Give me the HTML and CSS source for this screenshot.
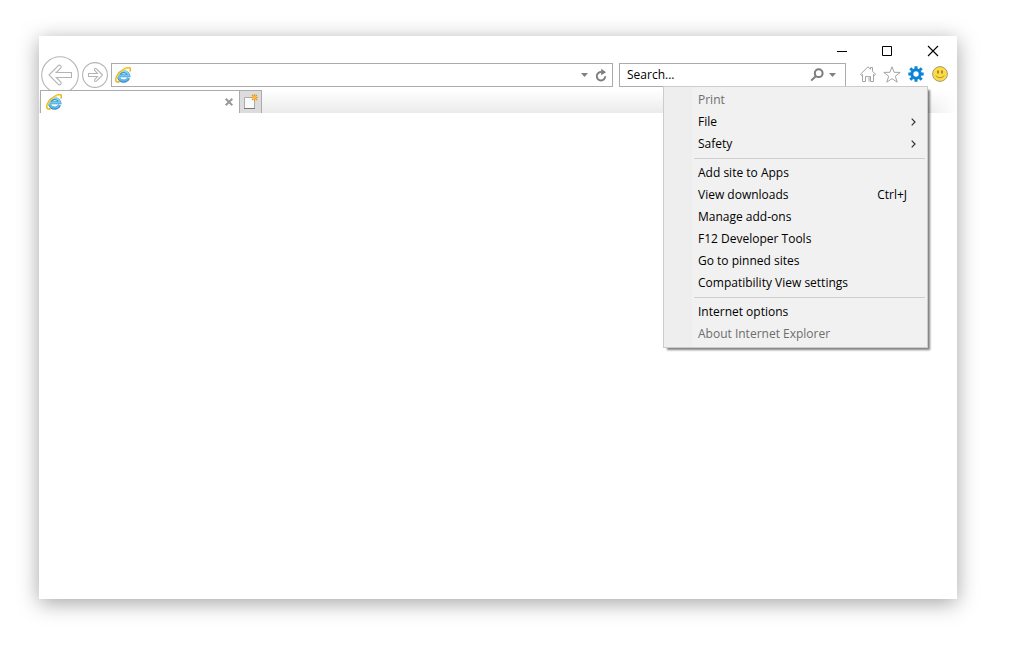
FILE: index.html
```
<!DOCTYPE html>
<html lang="en">
<head>
<meta charset="utf-8">
<title>Internet Explorer</title>
<link rel="stylesheet" href="styles.css">
</head>
<body>
<svg class="defs" aria-hidden="true">
  <defs>
    <linearGradient id="blue" gradientUnits="userSpaceOnUse" x1="0" y1="3" x2="0" y2="14"><stop offset="0" stop-color="#8fdcf8"/><stop offset="1" stop-color="#55b5ea"/></linearGradient>
    <symbol id="ie" viewBox="0 0 16 16">
      <path d="M13.600 11A5.200 4.800 0 1 1 13.800 8.700H4.500" fill="none" stroke="#3a8cc4" stroke-width="3"/>
      <path d="M13.200 11A5.200 4.800 0 1 1 13.800 8.700H4.500" fill="none" stroke="url(#blue)" stroke-width="2"/>
      <path d="M4.800 14.500C-.6 17-.6 10.500 5 5.300C9.600 1 14.200-.4 15.200 1.300C15.700 2.200 15.400 3.300 14.800 4.500" fill="none" stroke="#edb21c" stroke-width="1.500"/>
      <path d="M1.300 13C1.500 10.500 3.500 7 6.500 4.600C9.500 2 13 .5 14.600 1.300" fill="none" stroke="#ffde3c" stroke-width="1"/>
    </symbol>
  </defs>
</svg>
<main class="window">
  <div class="titlebar">
    <button class="caption" aria-label="Minimize"><svg width="12" height="12" viewBox="0 0 12 12"><path d="M2 6.500h10" stroke="#000"/></svg></button>
    <button class="caption" aria-label="Maximize"><svg width="12" height="12" viewBox="0 0 12 12"><path d="M1.500 1.500h9v9h-9z" fill="none" stroke="#000"/></svg></button>
    <button class="caption" aria-label="Close"><svg width="12" height="12" viewBox="0 0 12 12"><path d="M1 1l10 10M11 1L1 11" stroke="#000" stroke-width="1.100"/></svg></button>
  </div>
  <div class="toolbar">
    <button class="nav back" aria-label="Back"><svg width="38" height="38" viewBox="0 0 38 38" fill="none" stroke="#b4b4b4" stroke-width="1.100"><circle cx="19" cy="19" r="18.300"/><path d="M8 19l9.300-9.400c1-1 2.800-.2 2.800 1.200 0 .6-.2 1-.5 1.300l-4.300 4.400h15.200v5H15.300l4.300 4.400c.3.300.5.700.5 1.300 0 1.400-1.800 2.200-2.800 1.200z"/></svg></button>
    <button class="nav forward" aria-label="Forward"><svg width="26" height="26" viewBox="0 0 26 26" fill="none" stroke="#b4b4b4" stroke-width="1.100"><circle cx="13" cy="13" r="12.400"/><path d="M20.500 13l-6-6.200c-.8-.7-2-.1-2 .9 0 .4.100.7.400 1l2.500 2.800H6.500v3h8.900l-2.500 2.800c-.3.300-.4.600-.4 1 0 1 1.200 1.600 2 .9z"/></svg></button>
    <div class="field address">
      <svg width="16" height="16"><use href="#ie"/></svg>
      <input type="text" aria-label="Address">
      <button class="drop" aria-label="Show address list"><svg width="7" height="4" viewBox="0 0 7 4"><path d="M0 0h7L3.500 4z" fill="#808080"/></svg></button>
      <button class="refresh" aria-label="Refresh"><svg width="12" height="14" viewBox="0 0 12 14"><path d="M6.500 4.100A4.200 4.200 0 1 0 10.200 8.200" fill="none" stroke="#7d7d7d" stroke-width="1.900"/><path d="M6.200 .8l4.800 3.400-4.800 3z" fill="#7d7d7d"/></svg></button>
    </div>
    <div class="field search">
      <input type="text" aria-label="Search" placeholder="Search...">
      <button class="find" aria-label="Search"><svg width="14" height="14" viewBox="0 0 14 14" fill="none" stroke="#7d7d7d" stroke-width="2"><circle cx="8.700" cy="5.200" r="3.900"/><path d="M6 8L1.200 12.600"/></svg></button>
      <button class="drop" aria-label="Search options"><svg width="7" height="4" viewBox="0 0 7 4"><path d="M0 0h7L3.500 4z" fill="#808080"/></svg></button>
    </div>
    <div class="tools">
      <button aria-label="Home"><svg width="16" height="16" viewBox="0 0 16 16" fill="none" stroke="#a3a3a3"><path d="M2.500 8.500L1.300 9.300.5 8.200 8 .8l2.500 2.400V1.500h2v3.700l3 3-.8 1.100-1.200-.8v7h-3v-5h-1.500v5M2.500 8.500v7h3v-5h3" stroke-linejoin="round"/></svg></button>
      <button aria-label="Favorites"><svg width="18" height="17" viewBox="0 0 18 17" fill="none" stroke="#a3a3a3"><path d="M9 .8l2.100 5.500 6.100.1-4.900 3.800 1.900 6L9 12.600l-5.200 3.600 1.900-6L.8 6.400l6.100-.1z" stroke-linejoin="round"/></svg></button>
      <button aria-label="Tools" aria-haspopup="menu" aria-expanded="true"><svg width="16" height="16" viewBox="0 0 16 16" fill="none" stroke="#0a84d6"><circle cx="8" cy="8" r="4.200" stroke-width="3"/><path d="M8 .3v3M8 12.700v3M.3 8h3M12.700 8h3M2.300 2.300l2 2M11.700 11.700l2 2M2.300 13.700l2-2M11.700 4.300l2-2" stroke-width="3"/></svg></button>
      <button aria-label="Send feedback"><svg width="16" height="16" viewBox="0 0 16 16"><circle cx="8" cy="8" r="7.400" fill="#ffdb43" stroke="#a39a7c"/><path d="M6 4.500v3M10 4.500v3" stroke="#8c7225" stroke-width="1.500"/><path d="M4 9.500c1.300 2.900 6.700 2.900 8 0" fill="none" stroke="#a88a30"/></svg></button>
    </div>
  </div>
  <div class="tabs">
    <div class="tab">
      <svg width="16" height="16"><use href="#ie"/></svg>
      <button aria-label="Close tab"><svg width="8" height="8" viewBox="0 0 8 8"><path d="M.7.700l6.600 6.600M7.300.7L.7 7.300" stroke="#999" stroke-width="2"/></svg></button>
    </div>
    <button class="new-tab" aria-label="New tab"><svg width="15" height="16" viewBox="0 0 15 16"><path d="M1.500 3.500h10v11h-10z" fill="#fafafa" stroke="#aaa"/><path d="M1 14.500h11" stroke="#777"/><path d="M11.500 0v7M8 3.500h7M9 1l5 5M14 1L9 6" stroke="#e0922a" stroke-width="1.200"/><circle cx="11.500" cy="3.500" r="2.100" fill="#ffb638"/></svg></button>
  </div>
  <div class="menu" role="menu">
    <button role="menuitem" disabled>Print</button>
    <button role="menuitem">File<svg width="5" height="8" viewBox="0 0 5 8"><path d="M.7.700L4 4 .7 7.300" fill="none" stroke="#333" stroke-width="1.200"/></svg></button>
    <button role="menuitem">Safety<svg width="5" height="8" viewBox="0 0 5 8"><path d="M.7.700L4 4 .7 7.300" fill="none" stroke="#333" stroke-width="1.200"/></svg></button>
    <hr>
    <button role="menuitem">Add site to Apps</button>
    <button role="menuitem">View downloads<kbd>Ctrl+J</kbd></button>
    <button role="menuitem">Manage add-ons</button>
    <button role="menuitem">F12 Developer Tools</button>
    <button role="menuitem">Go to pinned sites</button>
    <button role="menuitem">Compatibility View settings</button>
    <hr>
    <button role="menuitem">Internet options</button>
    <button role="menuitem" disabled>About Internet Explorer</button>
  </div>
</main>
</body>
</html>
```
FILE: styles.css
```
* { box-sizing: border-box; }
body {
  margin: 0;
  min-height: 100vh;
  padding: 36px 53px 49px 39px;
  display: flex;
  background: #fff;
  font: 12px/22px "Open Sans", "Noto Sans", sans-serif;
  color: #000;
}
button {
  display: flex;
  align-items: center;
  justify-content: center;
  padding: 0;
  border: 0;
  background: none;
  font: inherit;
  color: inherit;
}
svg { display: block; flex: none; }
.defs { position: absolute; width: 0; height: 0; }
.window {
  position: relative;
  flex: 1;
  min-width: 0;
  background: #fff;
  box-shadow: 0 4px 20px rgba(0, 0, 0, .36);
}
.titlebar {
  display: flex;
  justify-content: flex-end;
  height: 27px;
  padding-right: 1px;
}
.caption { width: 46px; height: 30px; }
.toolbar {
  display: flex;
  align-items: center;
  height: 24px;
  margin-bottom: 3px;
  padding: 0 9px 0 2px;
}
.nav { flex: none; }
.back { margin: -7px 3px -7px 0; }
.forward { margin: -1px 3px -1px 0; }
.field {
  display: flex;
  align-items: center;
  height: 24px;
  border: 1px solid #ababab;
}
.field input {
  flex: 1;
  min-width: 0;
  height: 22px;
  padding: 0;
  border: 0;
  outline: 0;
  background: none;
  font: inherit;
}
.field input::placeholder { color: #000; opacity: 1; }
.address { flex: 1; min-width: 0; padding: 0 5px 0 3px; margin-right: 6px; }
.refresh { margin-left: 7px; }
.search { width: 227px; padding: 0 9px 0 7px; margin-right: 14px; }
.search .drop { margin-left: 5px; }
.tools { display: flex; align-self: flex-start; gap: 8px; }
.tools button { width: 16px; height: 22px; }
.tabs {
  position: relative;
  display: flex;
  height: 23px;
  padding-left: 1px;
  background: linear-gradient(90deg, rgba(255, 255, 255, 0) 97%, #fff), linear-gradient(#fff, #ebebeb);
}
.tab {
  display: flex;
  align-items: center;
  justify-content: space-between;
  width: 199px;
  padding: 0 6px 0 5px;
  border: solid #ababab;
  border-width: 1px 0 0 1px;
  background: #fff;
}
.new-tab {
  width: 23px;
  border: solid #ababab;
  border-width: 1px 1px 0;
  background: #dcdcdc;
}
.menu {
  position: absolute;
  top: 50px;
  right: 29px;
  width: 265px;
  padding: 2px;
  border: 1px solid #ccc;
  background: linear-gradient(90deg, #eee 28px, #f1f1f1 28px);
  box-shadow: 3px 3px 2px -1px rgba(0, 0, 0, .5);
}
.menu button {
  justify-content: space-between;
  width: 100%;
  height: 22px;
  padding: 0 9px 0 32px;
}
.menu button:disabled { color: #6d6d6d; }
.menu kbd { font: inherit; padding-right: 9px; }
.menu hr {
  height: 1px;
  margin: 3px 0 3px 28px;
  border: 0;
  background: #d0d0d0;
}
```
